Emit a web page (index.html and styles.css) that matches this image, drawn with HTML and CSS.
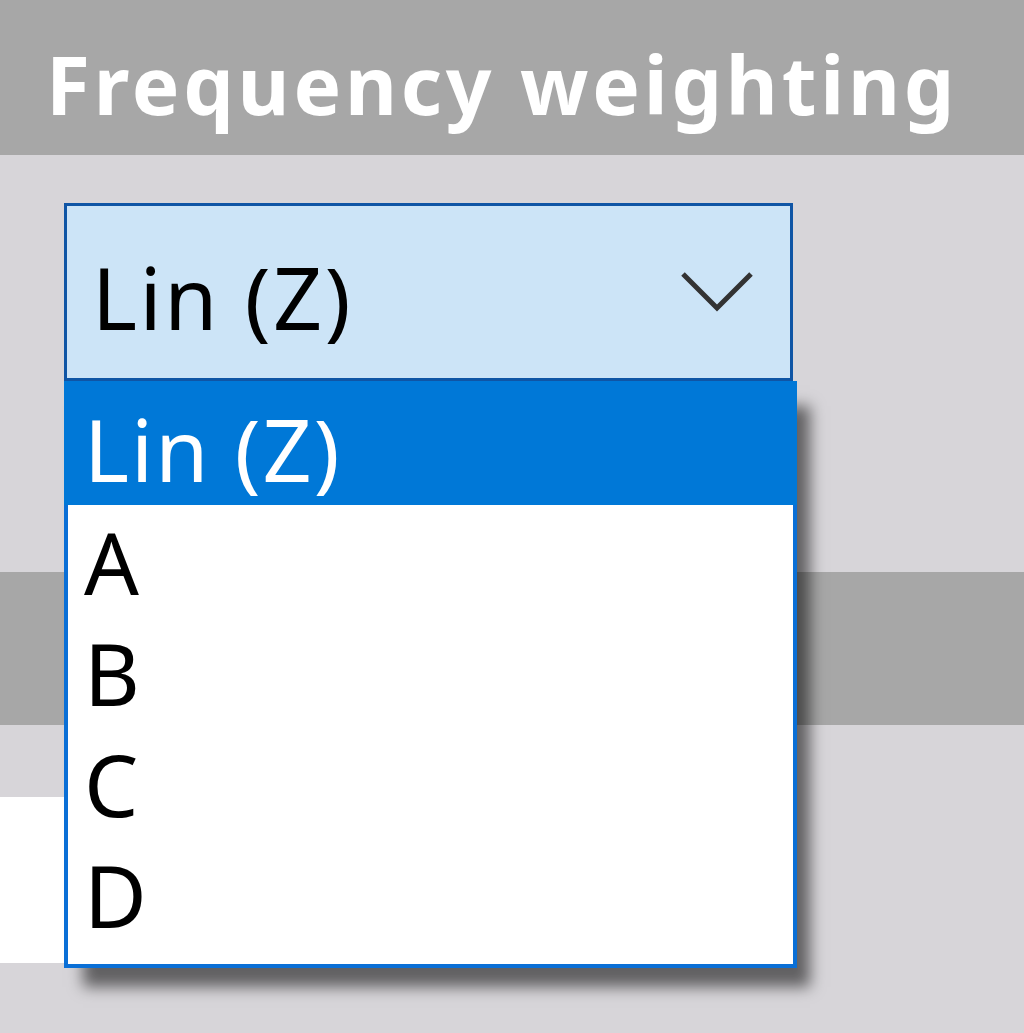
FILE: index.html
```html
<!DOCTYPE html>
<html lang="en">
<head>
    <meta charset="UTF-8">
    <meta name="viewport" content="width=device-width, initial-scale=1.0">
    <title>Frequency weighting</title>
    <link rel="stylesheet" href="styles.css">
</head>
<body>
    <div class="section-title">Frequency weighting</div>
    <div class="panel">
        <div class="combo">
            <span class="combo-value">Lin (Z)</span>
            <svg class="combo-arrow" width="74" height="44" viewBox="0 0 74 44">
                <polyline points="3,4 37,38 71,4" fill="none" stroke="#333" stroke-width="5"/>
            </svg>
        </div>
        <ul class="dropdown">
            <li class="selected">Lin (Z)</li>
            <li>A</li>
            <li>B</li>
            <li>C</li>
            <li>D</li>
        </ul>
    </div>
    <div class="section-title section-blank"></div>
    <div class="row">
        <div class="field"></div>
    </div>
</body>
</html>
```

FILE: styles.css
```css
body {
    margin: 0;
    padding: 0;
    min-height: 1033px;
    background-color: #d7d5d9;
    font-family: "Noto Sans", "Open Sans", sans-serif;
}
.section-title {
    background-color: #a7a7a7;
    color: #ffffff;
    height: 155px;
    box-sizing: border-box;
    padding-left: 46px;
    font-size: 80px;
    font-weight: 700;
    letter-spacing: 3.8px;
    line-height: 168px;
    white-space: nowrap;
    overflow: hidden;
}
.section-blank {
    height: 153px;
}
.panel {
    position: relative;
    height: 417px;
    padding-top: 48px;
    box-sizing: border-box;
}
.combo {
    margin-left: 64px;
    width: 729px;
    height: 178px;
    box-sizing: border-box;
    border: 3px solid #0f55a5;
    background-color: #cce4f7;
    display: flex;
    align-items: center;
    justify-content: space-between;
    padding: 0 36px 0 25px;
}
.combo-value {
    font-size: 86px;
    letter-spacing: 2.5px;
    color: #000;
    line-height: 1;
    margin-top: 10px;
}
.dropdown {
    position: absolute;
    top: 226px;
    left: 64px;
    width: 733px;
    height: 587px;
    box-sizing: border-box;
    margin: 0;
    padding: 0;
    list-style: none;
    background: #ffffff;
    border: 4px solid #0a6fd6;
    border-top: none;
    box-shadow: 16px 22px 14px -3px rgba(0, 0, 0, 0.55);
    z-index: 2;
}
.dropdown li {
    height: 111px;
    line-height: 114px;
    font-size: 86px;
    letter-spacing: 2px;
    padding-left: 16px;
    color: #000;
}
.dropdown li.selected {
    height: 124px;
    line-height: 136px;
    background-color: #0078d7;
    color: #ffffff;
    margin: 0 -4px;
    padding-left: 20px;
}
.row {
    padding-top: 72px;
}
.field {
    width: 64px;
    height: 166px;
    background: #ffffff;
}
```
